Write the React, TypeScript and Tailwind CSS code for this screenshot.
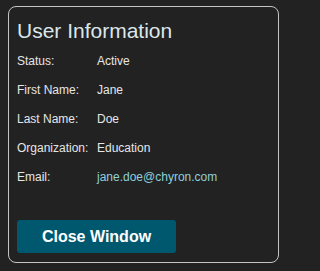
import React from 'react';

const rows: { label: string; value: string; link?: boolean }[] = [
  { label: 'Status:', value: 'Active' },
  { label: 'First Name:', value: 'Jane' },
  { label: 'Last Name:', value: 'Doe' },
  { label: 'Organization:', value: 'Education' },
  { label: 'Email:', value: 'jane.doe@chyron.com', link: true },
];

export default function App() {
  return (
    <div
      className="min-h-screen w-full bg-[#222222] pl-[8px] pt-[6px]"
      style={{ fontFamily: '"Liberation Sans", Arial, sans-serif' }}
    >
      <div className="flex h-[257px] w-[271px] flex-col rounded-[8px] border border-[#c4c4c4] px-[8px] pt-[12px]">
        <h1 className="h-[24px] text-[21px] leading-[24px] text-[#dbe7ec]">User Information</h1>

        <div className="mt-[3px] flex flex-col">
          {rows.map((row) => (
            <div key={row.label} className="flex h-[29px] items-center text-[12px]">
              <span className="w-[80px] text-[#e6e6e6]">{row.label}</span>
              <span className={row.link ? 'text-[#8fd0da]' : 'text-[#e6e6e6]'}>{row.value}</span>
            </div>
          ))}
        </div>

        <button className="mt-[29px] h-[33px] w-[159px] rounded-[3px] bg-[#00586f] text-[16px] font-bold text-white">
          Close Window
        </button>
      </div>
    </div>
  );
}
